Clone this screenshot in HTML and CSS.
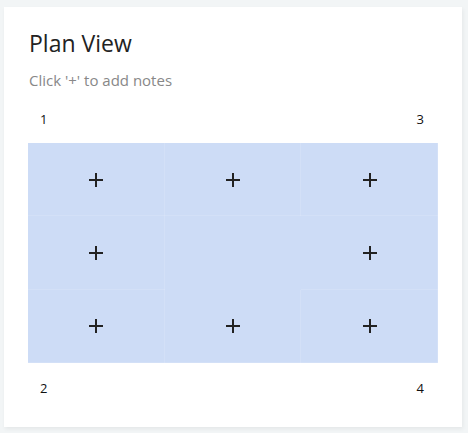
FILE: index.html
```html
<!DOCTYPE html>
<html>
<head>
<meta charset="utf-8">
<link rel="stylesheet" href="styles.css">
</head>
<body>
<div class="card">
  <h1 class="title">Plan View</h1>
  <p class="hint">Click '+' to add notes</p>
  <div class="labels"><span>1</span><span>3</span></div>
  <div class="grid">
    <div class="cell"><span class="plus"></span></div>
    <div class="cell"><span class="plus"></span></div>
    <div class="cell"><span class="plus"></span></div>
    <div class="cell"><span class="plus"></span></div>
    <div class="cell empty"></div>
    <div class="cell"><span class="plus"></span></div>
    <div class="cell"><span class="plus"></span></div>
    <div class="cell"><span class="plus"></span></div>
    <div class="cell"><span class="plus"></span></div>
  </div>
  <div class="labels bottom"><span>2</span><span>4</span></div>
</div>
</body>
</html>
```

FILE: styles.css
```css
html, body {
  margin: 0;
  padding: 0;
}
body {
  background: #f2f5f6;
  width: 468px;
  height: 433px;
  overflow: hidden;
  font-family: "Open Sans", "Liberation Sans", sans-serif;
}
.card {
  margin: 7px 0 0 4px;
  width: 458px;
  height: 420px;
  box-sizing: border-box;
  background: #fff;
  padding: 22px 24px 0 24px;
  box-shadow: 1px 2px 4px rgba(0, 0, 0, 0.06);
}
.title {
  margin: 0;
  font-size: 23px;
  line-height: 28px;
  font-weight: 400;
  color: #222;
  padding-left: 1px;
}
.hint {
  margin: 13px 0 0 0;
  font-size: 15px;
  line-height: 20px;
  color: #888;
  padding-left: 1px;
}
.labels {
  display: flex;
  justify-content: space-between;
  padding: 0 14px 0 12px;
  margin-top: 20px;
  height: 18px;
  font-size: 13px;
  line-height: 18px;
  color: #111;
}
.labels.bottom {
  margin-top: 16px;
}
.grid {
  margin-top: 15px;
  width: 410px;
  height: 220px;
  display: grid;
  grid-template-columns: repeat(3, 1fr);
  grid-template-rows: repeat(3, 1fr);
  background: #cddcf6;
}
.cell {
  display: flex;
  align-items: center;
  justify-content: center;
  box-shadow: inset 0 -1px 0 rgba(255,255,255,0.12), inset -1px 0 0 rgba(255,255,255,0.12);
}
.cell.empty {
  box-shadow: none;
}
.plus {
  position: relative;
  width: 14px;
  height: 14px;
}
.plus::before, .plus::after {
  content: "";
  position: absolute;
  background: #222;
}
.plus::before {
  left: 0;
  top: 6px;
  width: 14px;
  height: 2px;
}
.plus::after {
  left: 6px;
  top: 0;
  width: 2px;
  height: 14px;
}
```
